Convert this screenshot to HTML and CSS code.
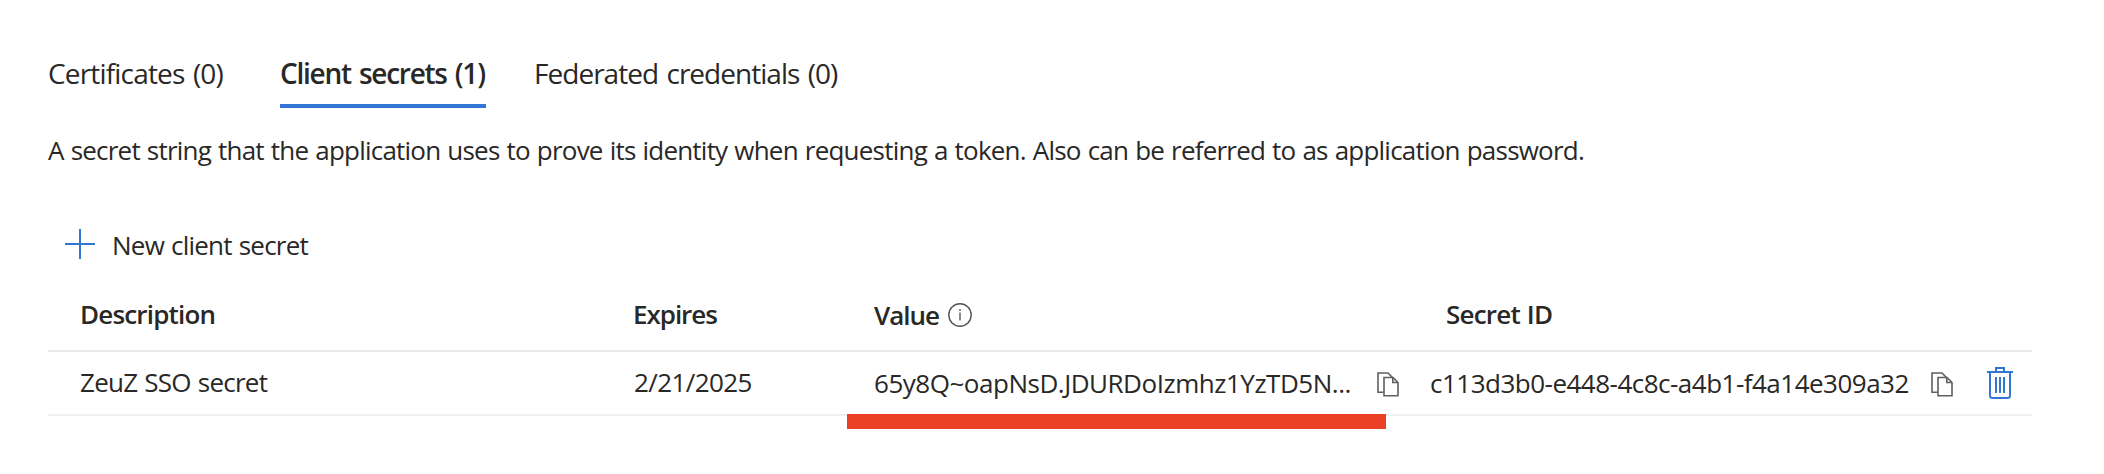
FILE: index.html
```
<!DOCTYPE html>
<html lang="en">
<head>
<meta charset="utf-8">
<title>Client secrets</title>
<link rel="stylesheet" href="styles.css">
</head>
<body>
<svg class="sprite" aria-hidden="true">
  <symbol id="copy" viewBox="0 0 22 25">
    <path d="M6.5 20.2H1V1H11L15.500 5.500" fill="none" stroke="#5f5f5f" stroke-width="1.6"/>
    <path d="M7 5.500H16L21 10.500V23.700H7Z M15.800 5.500V10.500H21" fill="none" stroke="#5f5f5f" stroke-width="1.6"/>
  </symbol>
</svg>
<main class="page">
  <nav class="tabs">
    <a class="tab tab-cert">Certificates (0)</a>
    <a class="tab tab-active">Client secrets (1)</a>
    <a class="tab tab-fed">Federated credentials (0)</a>
  </nav>
  <p class="intro">A secret string that the application uses to prove its identity when requesting a token. Also can be referred to as application password.</p>
  <div class="command">
    <svg class="plus" viewBox="0 0 30 30"><path d="M15 0V30M0 15H30" stroke="#3176d2" stroke-width="2"/></svg>
    <span>New client secret</span>
  </div>
  <section class="table">
    <div class="row head">
      <div class="description">Description</div>
      <div class="expires">Expires</div>
      <div class="value"><span>Value</span>
        <svg class="info" viewBox="0 0 24 24"><circle cx="12" cy="12" r="11.200" fill="none" stroke="#555" stroke-width="1.4"/><path d="M12 9.500V17.500M12 6V8" stroke="#666" stroke-width="1.5"/></svg>
      </div>
      <div class="secret">Secret ID</div>
    </div>
    <div class="row entry">
      <div class="description">ZeuZ SSO secret</div>
      <div class="expires">2/21/2025</div>
      <div class="value"><span>65y8Q~oapNsD.JDURDoIzmhz1YzTD5N...</span><svg class="copy"><use href="#copy"/></svg></div>
      <div class="secret"><span>c113d3b0-e448-4c8c-a4b1-f4a14e309a32</span><svg class="copy"><use href="#copy"/></svg>
        <svg class="trash" viewBox="0 0 26 32"><g fill="none" stroke="#3176d2" stroke-width="2"><path d="M0 5H26M9 5V1H17V5M3 5V28.500Q3 31 5.500 31H20.500Q23 31 23 28.500V5M9 10V26M13 10V26M17 10V26"/></g></svg>
      </div>
      <div class="marker"></div>
    </div>
  </section>
</main>
</body>
</html>
```

FILE: styles.css
```
body {
  margin: 0;
  background: #fff;
  color: #292827;
  font-family: "Open Sans", "Noto Sans", sans-serif;
}

.sprite {
  display: none;
}

.page {
  box-sizing: border-box;
  height: 474px;
  padding: 53px 72px 0 48px;
  overflow: hidden;
  font-size: 26px;
  line-height: 36px;
  white-space: nowrap;
  word-spacing: 1px;
}

.tabs {
  display: flex;
  font-size: 28px;
  line-height: 40px;
  word-spacing: 2px;
}

.tab {
  box-sizing: border-box;
  height: 55px;
}

.tab-cert {
  width: 232px;
  letter-spacing: -0.826px;
}

.tab-active {
  width: 206px;
  margin-right: 48px;
  border-bottom: 4px solid #3176d2;
  font-weight: 600;
  letter-spacing: -1.25px;
}

.tab-fed {
  letter-spacing: -0.97px;
}

.intro {
  margin: 24px 0 0;
  letter-spacing: -0.782px;
}

.command {
  display: flex;
  align-items: flex-start;
  gap: 17px;
  margin-top: 59px;
  padding-left: 17px;
  letter-spacing: -0.775px;
}

.plus {
  width: 30px;
  height: 30px;
  margin-top: 2px;
}

.row {
  position: relative;
  display: grid;
  grid-template-columns: 553px 239px 557px 1fr;
  box-sizing: border-box;
  padding-left: 32px;
}

.head {
  height: 89px;
  padding-top: 33px;
  border-bottom: 2px solid #eaeaea;
  font-weight: 600;
  letter-spacing: -0.816px;
}

.head .expires,
.head .value {
  letter-spacing: -1.04px;
}

.head .value {
  display: flex;
  gap: 9px;
  padding: 1px 0 0 2px;
}

.head .secret {
  padding-left: 17px;
  letter-spacing: -0.8px;
}

.info {
  width: 24px;
  height: 24px;
  margin-top: 6px;
}

.entry {
  height: 64px;
  padding-top: 12px;
  border-bottom: 2px solid #f0f0f0;
  letter-spacing: -0.75px;
}

.entry .expires {
  padding-left: 1px;
  letter-spacing: -0.6px;
}

.entry .value,
.entry .secret {
  display: flex;
  padding-top: 1px;
}

.entry .value {
  padding-left: 2px;
}

.entry .value span {
  width: 503px;
  letter-spacing: -0.477px;
}

.entry .secret {
  padding-left: 1px;
}

.entry .secret span {
  width: 501px;
  letter-spacing: -0.51px;
}

.copy {
  width: 22px;
  height: 25px;
  margin-top: 7px;
}

.trash {
  width: 26px;
  height: 32px;
  margin: 2px 0 0 34px;
}

.marker {
  position: absolute;
  top: 62px;
  left: 799px;
  width: 539px;
  height: 15px;
  background: #eb4026;
}
```
